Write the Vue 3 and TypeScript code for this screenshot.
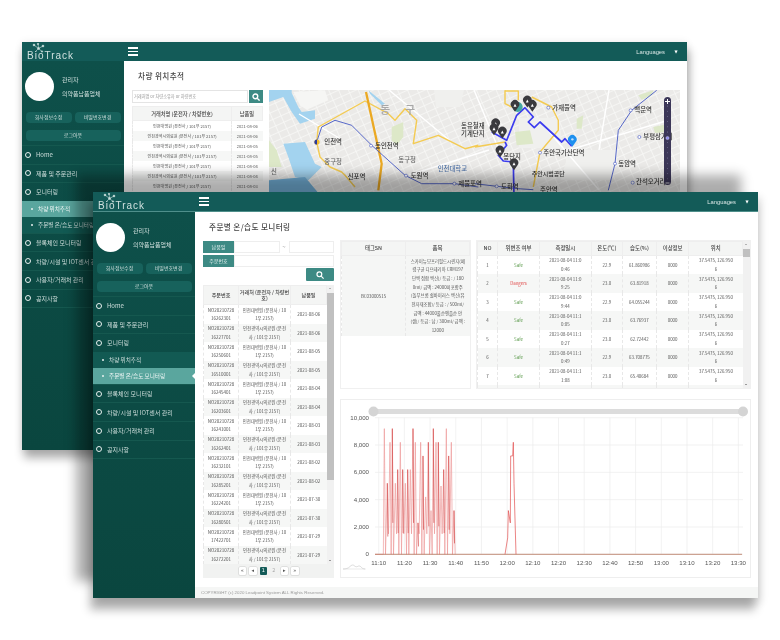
<script setup lang="ts">
const menuTop = ['Home', '제품 및 주문관리', '모니터링']
const subs = ['차량 위치추적', '주문별 온/습도 모니터링']
const menuBottom = ['블록체인 모니터링', '차량/시설 및 IOT센서 관리', '사용자/거래처 관리', '공지사항']

const vehicleRows = [
  ['인천대병원 (운전사 / 101우 2157)', '2021-08-06'],
  ['인천광역시의료원 (운전사 / 101우 2157)', '2021-08-06'],
  ['인천대병원 (운전사 / 101우 2157)', '2021-08-05'],
  ['인천광역시의료원 (운전사 / 101우 2157)', '2021-08-05'],
  ['인천대병원 (운전사 / 101우 2157)', '2021-08-04'],
  ['인천광역시의료원 (운전사 / 101우 2157)', '2021-08-04'],
  ['인천대병원 (운전사 / 101우 2157)', '2021-08-03'],
]

const orderNos = ['16262301', '16227701', '16250601', '16510001', '16245401', '16203601', '16241001', '16262401', '16232101', '16285201', '16224201', '16280501', '17422701', '16272201']
const orderDates = ['08-06', '08-06', '08-05', '08-05', '08-04', '08-04', '08-03', '08-03', '08-02', '08-02', '07-30', '07-30', '07-29', '07-29']

const sensorRows = [
  ['1', 'Safe', '0:46', '22.9', '61.860986'],
  ['2', 'Dangers', '9:25', '23.0', '63.81918'],
  ['3', 'Safe', '9:44', '22.9', '64.055244'],
  ['4', 'Safe', '0:05', '23.0', '63.76937'],
  ['5', 'Safe', '0:27', '23.0', '62.72442'],
  ['6', 'Safe', '0:49', '22.9', '63.708775'],
  ['7', 'Safe', '1:08', '23.0', '65.40684'],
  ['8', 'Safe', '1:30', '23.0', '63.20155'],
]
const sensorDates = ['11:0', '11:0', '11:0', '11:1', '11:1', '11:1', '11:1', '11:1']

const itemLines = [
  '스카이뉴모프리필드시린지(폐',
  '렴구균 디프테리아 CRM197',
  '단백 접합 백신)/ 등급 : / 180',
  '0ml/ 금액 : 24000미포함주',
  '(돌푸브롬 쉴바이러스 백신(유',
  '전자재조합)/ 등급 : / 500ml/',
  '금액 : 44000풀순엔플순 안',
  '(생)/ 등급 : 남 / 300ml/ 금액 :',
  '12000',
]

// the two map crops were measured separately, so points come in two sets
type Pt = [number, number]
const L = ([x, y]: Pt): Pt => [x / 3 - 4, y / 3 - 3]
const R = ([x, y]: Pt): Pt => [x / 3 + 206, y / 3 - 3]
const line = (pts: Pt[]) => pts.map((p, i) => `${i ? 'L' : 'M'}${p[0].toFixed(1)} ${p[1].toFixed(1)}`).join('')
const poly = (pts: Pt[]) => line(pts) + 'Z'

const water = [
  poly(([[12, 8], [80, 8], [80, 18], [100, 60], [110, 75], [150, 70], [150, 95], [105, 110], [80, 75], [55, 30], [12, 45]] as Pt[]).map(L)),
  poly(([[55, 170], [120, 165], [150, 230], [170, 240], [130, 280], [90, 270], [70, 210]] as Pt[]).map(L)),
  poly(([[310, 10], [360, 50], [350, 55], [315, 20]] as Pt[]).map(L)),
]
const sea = poly(([[12, 280], [120, 270], [170, 330], [12, 340]] as Pt[]).map(L))
const parks = [
  poly(([[12, 160], [35, 190], [50, 240], [12, 240]] as Pt[]).map(L)),
  poly(([[380, 120], [415, 105], [415, 150], [395, 175], [380, 160]] as Pt[]).map(L)),
  poly(([[490, 25], [535, 10], [530, 25], [500, 38]] as Pt[]).map(R)),
  poly(([[305, 95], [325, 85], [320, 125], [305, 125]] as Pt[]).map(R)),
  poly(([[535, 120], [575, 112], [575, 135], [540, 138]] as Pt[]).map(R)),
  poly(([[120, 135], [165, 130], [175, 170], [125, 175]] as Pt[]).map(R)),
]
const port = poly(([[85, 15], [180, 10], [190, 40], [125, 68], [105, 55]] as Pt[]).map(L))
const yellow = [
  line(([[155, 165], [160, 120], [300, 42], [370, 80], [390, 100], [420, 65], [455, 100], [445, 170], [520, 145], [600, 185], [640, 175]] as Pt[]).map(L)),
  line(([[155, 165], [165, 210], [195, 240], [230, 255], [240, 265], [270, 300]] as Pt[]).map(L)),
  line(([[0, 180], [90, 165]] as Pt[]).map(R)),
  line(([[90, 10], [90, 50], [110, 60]] as Pt[]).map(R)),
  line(([[90, 12], [130, 12], [130, 40]] as Pt[]).map(R)),
  line(([[170, 30], [230, 60], [250, 100], [250, 130], [195, 195], [175, 300]] as Pt[]).map(R)),
]
const orange = line(([[303, 15], [350, 230], [340, 310]] as Pt[]).map(L))
const subway = [
  line(([[155, 165], [170, 120], [210, 100], [260, 115], [320, 175], [420, 265], [470, 290], [570, 290], [640, 300]] as Pt[]).map(L)),
  line(([[0, 290], [65, 298], [130, 305], [175, 308]] as Pt[]).map(R)),
  line(([[545, 10], [470, 70], [430, 130], [420, 230], [400, 310]] as Pt[]).map(R)),
]
const route = line(([[290, 178], [270, 155], [260, 165], [195, 105], [178, 122], [160, 105], [175, 90], [150, 62], [125, 85], [95, 160], [50, 135]] as Pt[]).map(R))
const route2 = line(([[90, 165], [95, 175], [70, 205], [85, 222], [115, 225], [117, 330]] as Pt[]).map(R))
const stations: Pt[] = [
  ...([[318, 176], [423, 266], [568, 290]] as Pt[]).map(L),
  ...([[65, 298], [467, 70], [493, 150], [420, 230], [473, 287], [220, 62], [195, 197]] as Pt[]).map(R),
]
const pins: Pt[] = ([[120, 55], [157, 42], [172, 55], [62, 110], [57, 125], [82, 135], [75, 192], [117, 230]] as Pt[]).map(R)
const teal = R([128, 60])
const gem = R([292, 160])

const mapLabels: { p: Pt; t: string; s?: number; c?: string }[] = [
  { p: L([178, 172]), t: '인천역' },
  { p: L([330, 182]), t: '동인천역' },
  { p: L([178, 230]), t: '중구청', c: '#666' },
  { p: L([248, 277]), t: '신포역' },
  { p: L([400, 224]), t: '동구청', c: '#666' },
  { p: L([518, 252]), t: '인천대학교', c: '#5577aa' },
  { p: L([437, 274]), t: '도원역' },
  { p: L([580, 298]), t: '제물포역' },
  { p: L([345, 80]), t: '동', s: 11, c: '#a8a8a8' },
  { p: L([420, 80]), t: '구', s: 11, c: '#a8a8a8' },
  { p: L([18, 260]), t: '신', c: '#666' },
  { p: L([588, 122]), t: '동유철재' },
  { p: L([588, 146]), t: '기계단지' },
  { p: R([232, 70]), t: '가재울역' },
  { p: R([478, 76]), t: '백운역' },
  { p: R([505, 155]), t: '부평삼거리' },
  { p: R([430, 238]), t: '동암역' },
  { p: R([483, 292]), t: '간석오거리' },
  { p: R([205, 205]), t: '주안국가산단역' },
  { p: R([170, 268]), t: '주안시범공단', s: 6 },
  { p: R([85, 215]), t: '봉단지' },
  { p: R([78, 305]), t: '도화역' },
  { p: R([195, 315]), t: '주안역' },
]
const zoomDots = Array.from({ length: 15 }, (_, i) => 16 + i * 5.2)

// chart, in pixels of the crop divided by 3
const cx = (zoomX: number) => zoomX / 3 - 10
const cy = (v: number) => 155.3 - (v / 10000) * 136.6
const yTicks = [0, 2000, 4000, 6000, 8000, 10000]
const xTicks = ['11:10', '11:20', '11:30', '11:40', '11:50', '12:00', '12:10', '12:20', '12:30', '12:40', '12:50', '13:00', '13:10', '13:20', '13:30']
const tickX = (i: number) => 38.7 + i * 25.69

const peaks = [[163, 9200], [172, 5200], [180, 8200], [187, 9200], [196, 5200], [203, 6200], [211, 8200], [218, 6200], [226, 5200], [233, 6200], [241, 6200], [249, 9200], [256, 8200], [264, 2300], [272, 8200], [279, 7200], [287, 4200], [295, 8200], [303, 3200], [310, 9200], [318, 8200], [325, 8200], [333, 5000], [341, 6200], [349, 9200], [356, 7200], [364, 8200], [372, 3200]]
function seriesPoints(): string {
  const pts: string[] = [`${cx(135)},${cy(0)}`, `${cx(160)},${cy(0)}`]
  peaks.forEach(([x, v], i) => {
    pts.push(`${cx(x)},${cy(v)}`)
    pts.push(`${cx(x + 3.5)},${cy(i % 3 === 1 ? 1500 : 0)}`)
  })
  return pts.join(' ')
}
const pale = seriesPoints()
const strong = peaks.filter((_, i) => i % 2 === 1).map(([x, v]) => `M${cx(x)} ${cy(v)}L${cx(x + 1.5)} ${cy(v * 0.25)}`).join('')
const hump = [[525, 0], [533, 1200], [535, 3200], [541, 2300], [542, 7200], [548, 7200], [550, 8200], [552, 5200], [558, 0]]
  .map(([x, v]) => `${cx(x)},${cy(v)}`).join(' ')
</script>

<template>
  <div class="stage">
    <section v-for="(win, w) in [0, 1]" :key="win" class="win" :class="w === 0 ? 'win-back' : 'win-front'">
      <header class="bar">
        <div class="logo">
          <svg width="15" height="11" viewBox="0 0 15 11" fill="none" stroke="#cfe2df" stroke-width=".6">
            <path d="M7.500 5.500 3 2M7.500 5.500 12 3M7.500 5.500 7 .5M7.500 5.500 4 9M7.500 5.500 11 8.500" />
            <circle cx="3" cy="2" r=".9" fill="#cfe2df" />
            <circle cx="12" cy="3" r=".9" fill="#cfe2df" />
            <circle cx="7" cy=".9" r=".7" fill="#cfe2df" />
            <circle cx="7.500" cy="5.500" r="1" fill="#cfe2df" />
            <circle cx="11" cy="8.500" r=".7" fill="#cfe2df" />
          </svg>
          <span>BioTrack</span>
        </div>
        <div class="burger"><i></i><i></i><i></i></div>
        <div class="lang">Languages</div>
        <div class="caret">▼</div>
      </header>

      <div class="body">
        <aside class="side">
          <div class="profile">
            <div class="avatar"></div>
            <div class="who">
              <div>관리자</div>
              <div>의약품납품업체</div>
            </div>
          </div>
          <div class="pills">
            <span class="pill">회사정보수정</span>
            <span class="pill">비밀번호변경</span>
            <span class="pill wide">로그아웃</span>
          </div>
          <nav class="menu">
            <div v-for="m in menuTop" :key="m" class="item"><b class="ring"></b>{{ m }}</div>
            <div v-for="(s, i) in subs" :key="s" class="sub" :class="{ on: i === w }"><b class="dot"></b>{{ s }}</div>
            <div v-for="m in menuBottom" :key="m" class="item"><b class="ring"></b>{{ m }}</div>
          </nav>
        </aside>

        <main v-if="w === 0" class="main">
          <h1 class="title back-title">차량 위치추적</h1>
          <div class="track">
            <div class="col-left">
              <div class="search">
                <div class="search-input">거래처명 or 차량소유자 or 차량번호</div>
                <div class="search-btn">
                  <svg width="8" height="8" viewBox="0 0 10 10" fill="none" stroke="#fff" stroke-width="1.7"><circle cx="4.200" cy="4.200" r="3" /><path d="m6.500 6.500 3 3" /></svg>
                </div>
              </div>
              <table class="grid vehicle">
                <thead><tr><th>거래처명 (운전자 / 차량번호)</th><th class="narrow">납품일</th></tr></thead>
                <tbody>
                  <tr v-for="(r, i) in vehicleRows" :key="i"><td>{{ r[0] }}</td><td>{{ r[1] }}</td></tr>
                </tbody>
              </table>
            </div>
            <svg class="map" width="411" height="110" viewBox="0 0 411 110">
              <defs>
                <pattern id="streets" width="9" height="7" patternUnits="userSpaceOnUse" patternTransform="rotate(-24)">
                  <rect width="9" height="7" fill="#ebeae8" />
                  <path d="M0 .5h9M.5 0v7" stroke="#f8f8f6" stroke-width=".8" />
                </pattern>
              </defs>
              <rect width="411" height="110" fill="url(#streets)" />
              <path :d="port" fill="#f6f6f4" />
              <path d="M165 0h30l-4 17h-24zM250 28h40l4 30h-44zM300 60h50l-8 30h-50z" fill="#f0f0ee" />
              <path v-for="(d, i) in parks" :key="i" :d="d" fill="#dde8c8" />
              <path v-for="(d, i) in water" :key="i" :d="d" fill="#a3d3ef" />
              <path :d="sea" fill="#74b2da" />
              <path d="M30 24 70 48M120 0 180 50M205 0 230 60M270 30 330 100M340 0 330 60M300 60l100-30M140 85 220 60" stroke="#fff" stroke-width="1.400" fill="none" />
              <path v-for="(d, i) in yellow" :key="i" :d="d" fill="none" stroke="#f4cb52" stroke-width="1.400" stroke-linejoin="round" />
              <path :d="orange" fill="none" stroke="#eba923" stroke-width="2.300" />
              <path v-for="(d, i) in subway" :key="i" :d="d" fill="none" stroke="#4659c4" stroke-width=".9" />
              <circle v-for="(s, i) in stations" :key="i" :cx="s[0]" :cy="s[1]" r="1.500" fill="#fff" stroke="#4659c4" stroke-width=".6" />
              <circle cx="48" cy="52" r="2.600" fill="#f4bd2d" />
              <path d="M48 49.400a2.600 2.600 0 0 0 0 5.200z" fill="#2c3a9a" />
              <path :d="route" fill="none" stroke="#3c3cef" stroke-width="1.700" stroke-linejoin="round" />
              <path :d="route2" fill="none" stroke="#3c3cef" stroke-width="1.700" stroke-linejoin="round" />
              <circle :cx="teal[0]" :cy="teal[1]" r="5" fill="#45a7a0" />
              <g v-for="(p, i) in pins" :key="i" :transform="`translate(${p[0]} ${p[1]})`">
                <path d="M0 6.500-3.500 1.500a4.300 4.300 0 1 1 7 0z" fill="#3a3a3e" />
                <path d="M-1.500 1.500 0-1.500 1.500 1.500z" fill="#fff" />
              </g>
              <g :transform="`translate(${gem[0]} ${gem[1]})`">
                <path d="M0 6.500-3.500 1.500a4.300 4.300 0 1 1 7 0z" fill="#1e90ef" />
                <circle cy="-1" r="1.200" fill="#bfe0fb" />
              </g>
              <text v-for="l in mapLabels" :key="l.t" :x="l.p[0]" :y="l.p[1]" :font-size="l.s || 6.400" :fill="l.c || '#333'" class="map-text">{{ l.t }}</text>
              <rect x="395" y="7" width="7" height="88" rx="3.500" fill="#3c3758" />
              <path d="M398.500 9v5M396 11.500h5" stroke="#fff" stroke-width="1" />
              <circle v-for="d in zoomDots" :key="d" cx="398.500" :cy="d" r=".4" fill="#a9a6c6" />
              <circle cx="398.500" cy="48" r="1.600" fill="#8f8cf0" stroke="#e8e8ff" stroke-width=".4" />
              <path d="M396.500 93h4" stroke="#fff" stroke-width=".8" />
            </svg>
          </div>
        </main>

        <main v-else class="main">
          <h1 class="title">주문별 온/습도 모니터링</h1>
          <div class="monitor">
            <div class="col-left orders">
              <div class="form-row">
                <span class="tag">납품일</span><span class="field"></span><span class="tilde">~</span><span class="field"></span>
              </div>
              <div class="form-row">
                <span class="tag">주문번호</span><span class="field"></span>
              </div>
              <div class="find">
                <svg width="8" height="8" viewBox="0 0 10 10" fill="none" stroke="#fff" stroke-width="1.500"><circle cx="4.200" cy="4.200" r="3" /><path d="m6.500 6.500 3 3" /></svg>
              </div>
              <div class="order-wrap">
                <table class="grid orderlist">
                  <thead><tr><th class="c1">주문번호</th><th class="c2">거래처 (운전자 / 차량번호)</th><th class="c3">납품일</th></tr></thead>
                  <tbody>
                    <tr v-for="(n, i) in orderNos" :key="n">
                      <td>NO20210728<br />{{ n }}</td>
                      <td class="wrapname">{{ i % 2 ? '인천광역시의료원 (운전사 / 101우 2157)' : '인천대병원 (운전사 / 101우 2157)' }}</td>
                      <td>2021-{{ orderDates[i] }}</td>
                    </tr>
                  </tbody>
                </table>
                <div class="scroll"><span class="thumb long"></span></div>
              </div>
              <div class="pager">
                <span class="pg">«</span><span class="pg">◂</span><span class="pg cur">1</span><span class="pg plain">2</span><span class="pg">▸</span><span class="pg">»</span>
              </div>
            </div>

            <div class="col-right">
              <div class="tables">
                <div class="panel tagbox">
                  <table class="grid tagtable">
                    <thead><tr><th>태그SN</th><th>품목</th></tr></thead>
                    <tbody>
                      <tr>
                        <td>BC03000515</td>
                        <td class="item-text"><template v-for="t in itemLines" :key="t">{{ t }}<br /></template></td>
                      </tr>
                    </tbody>
                  </table>
                </div>
                <div class="panel sensorbox">
                  <table class="grid sensors">
                    <thead>
                      <tr><th class="no">NO</th><th>위변조 여부</th><th>측정일시</th><th>온도(℃)</th><th>습도(%)</th><th>이상정보</th><th>위치</th></tr>
                    </thead>
                    <tbody>
                      <tr v-for="(r, i) in sensorRows" :key="r[0]">
                        <td>{{ r[0] }}</td>
                        <td :class="r[1] === 'Safe' ? 'safe' : 'danger'">{{ r[1] }}</td>
                        <td>2021-08-04 {{ sensorDates[i] }}<br />{{ r[2] }}</td>
                        <td>{{ r[3] }}</td>
                        <td>{{ r[4] }}</td>
                        <td>0000</td>
                        <td>37.5475, 126.950<br />6</td>
                      </tr>
                    </tbody>
                  </table>
                  <div class="scroll"><span class="thumb short"></span></div>
                </div>
              </div>

              <div class="chart">
                <svg width="409" height="177" viewBox="1 1 409 177">
                  <rect x="33" y="10" width="370" height="5" rx="2.500" fill="#dcdcdc" />
                  <circle cx="33.500" cy="12.500" r="5" fill="#d4d4d4" />
                  <circle cx="403" cy="12.500" r="5" fill="#d4d4d4" />
                  <g stroke="#ececec" stroke-width=".7">
                    <line v-for="v in yTicks" :key="v" x1="35" x2="403" :y1="cy(v)" :y2="cy(v)" />
                    <line v-for="(t, i) in xTicks" :key="t" :x1="tickX(i)" :x2="tickX(i)" y1="18.700" y2="155.300" />
                  </g>
                  <text v-for="v in yTicks" :key="v" x="29" :y="cy(v) + 2" text-anchor="end" class="axis">{{ v.toLocaleString('en-US') }}</text>
                  <text v-for="(t, i) in xTicks" :key="t" :x="tickX(i)" y="166" text-anchor="middle" class="axis">{{ t }}</text>
                  <polyline :points="pale" fill="none" stroke="#ee9c9c" stroke-width=".7" />
                  <path :d="strong" fill="none" stroke="#c33" stroke-width=".6" />
                  <polyline :points="hump" fill="none" stroke="#e25050" stroke-width=".7" />
                  <line x1="35" x2="402" :y1="cy(0)" :y2="cy(0)" stroke="#b5745a" stroke-width=".8" />
                  <path d="M3 170c3 0 5-.5 7-2.500 1.500-1.500 3-2 4-1 1.500 1.500 2.500 1.500 3.500 1 1.500-1 3-.500 4 1 1 1 2 1.500 4 1.500" fill="none" stroke="#bbb" stroke-width=".5" />
                  <line x1="3" x2="25" y1="170" y2="170" stroke="#ccc" stroke-width=".4" />
                </svg>
              </div>
            </div>
          </div>
          <footer class="foot">COPYRIGHT (c) 2020 Leadpoint System ALL Rights Reserved.</footer>
        </main>
      </div>
    </section>
  </div>
</template>

<style>
html, body {
  background: #fff;
}
</style>

<style scoped>
.stage {
  position: relative;
  width: 780px;
  height: 640px;
  overflow: hidden;
  background: #fff;
  font-family: "Noto Sans CJK KR", "Liberation Sans", sans-serif;
  filter: blur(0.3px);
}
.win {
  position: absolute;
  display: flex;
  flex-direction: column;
  background: #fff;
}
.win-back {
  left: 22px;
  top: 42px;
  width: 665px;
  height: 408px;
  box-shadow: 2px 8px 9px rgba(0, 0, 0, 0.32), 0 0 8px rgba(0, 0, 0, 0.08);
}
.win-front {
  left: 93px;
  top: 192px;
  width: 665px;
  height: 406px;
  box-shadow: -17px -17px 11px rgba(0, 0, 0, 0.32), -3px 12px 9px rgba(0, 0, 0, 0.28), 3px 5px 8px rgba(0, 0, 0, 0.12);
}
.bar {
  height: 19px;
  flex: none;
  display: flex;
  align-items: center;
  background: #135b58;
  color: #fff;
}
.win-front .bar {
  height: 20px;
  border-bottom: 1px solid #4f8f8b;
  box-sizing: border-box;
}
.logo {
  width: 102px;
  height: 100%;
  flex: none;
  padding: 1px 0 0 5px;
  box-sizing: border-box;
  display: flex;
  flex-direction: column;
  color: #cfe0de;
}
.logo svg {
  flex: none;
  margin-left: 4px;
}
.logo span {
  margin-top: -3px;
  font-family: "Liberation Sans", sans-serif;
  font-size: 10px;
  line-height: 10px;
  letter-spacing: 1px;
}
.burger {
  width: 10px;
  display: flex;
  flex-direction: column;
  gap: 2px;
  margin-left: 4px;
}
.burger i {
  height: 1.400px;
  background: #fff;
}
.lang {
  margin-left: auto;
  font: 5.800px "Liberation Sans", sans-serif;
  color: #dbe8e7;
}
.caret {
  width: 22px;
  text-align: center;
  font: 4px "DejaVu Sans", sans-serif;
}
.body {
  flex: 1;
  min-height: 0;
  display: flex;
}
.side {
  width: 102px;
  flex: none;
  background: linear-gradient(#0e504a, #0a463f);
  color: #d0dfdd;
  font-size: 6px;
}
.profile {
  display: flex;
  gap: 8px;
  align-items: center;
  padding: 11px 0 0 3px;
}
.avatar {
  width: 29px;
  height: 29px;
  border-radius: 50%;
  background: #fff;
}
.who div {
  line-height: 14px;
}
.pills {
  display: flex;
  flex-wrap: wrap;
  justify-content: center;
  gap: 3px;
  padding: 11px 3px 0;
  height: 44px;
  box-sizing: border-box;
  font-size: 5px;
}
.pill {
  width: 46px;
  height: 10.500px;
  line-height: 10.500px;
  border-radius: 4px;
  background: #17625c;
  text-align: center;
}
.pill.wide {
  width: 95px;
}
.menu {
  border-bottom: 1px solid #15584f;
}
.item {
  height: 18.600px;
  display: flex;
  align-items: center;
  gap: 5px;
  padding-left: 3px;
  box-sizing: border-box;
  border-top: 1px solid #15584f;
  font-size: 6px;
}
.ring {
  width: 4px;
  height: 4px;
  border: 1px solid #e8f0ef;
  border-radius: 50%;
}
.sub {
  position: relative;
  height: 16px;
  display: flex;
  align-items: center;
  gap: 5px;
  padding-left: 9px;
  background: #125a53;
  font-size: 5.600px;
}
.sub.on {
  background: #5aa69e;
  color: #f0f7f6;
}
.sub.on::after {
  content: "";
  position: absolute;
  right: 0;
  top: 5px;
  border: 3px solid transparent;
  border-right-color: #fff;
}
.dot {
  width: 2px;
  height: 2px;
  background: #e8f0ef;
  border-radius: 50%;
}
.main {
  flex: 1;
  min-width: 0;
  display: flex;
  flex-direction: column;
  background: #fff;
}
.title {
  margin: 0;
  height: 28px;
  padding-left: 14px;
  font-size: 7.600px;
  line-height: 30px;
  font-weight: 500;
  color: #444;
  letter-spacing: 0.4px;
}
.back-title {
  height: 29px;
}
.track {
  display: flex;
  gap: 6px;
  padding-left: 8px;
}
.col-left {
  width: 131px;
  flex: none;
}
.search {
  display: flex;
  gap: 1px;
  height: 13px;
}
.search-input {
  flex: 1;
  border: 1px solid #e4e4e4;
  font-size: 4.200px;
  line-height: 11px;
  padding-left: 1px;
  color: #999;
}
.search-btn {
  width: 14px;
  background: #3d8a84;
  display: flex;
  align-items: center;
  justify-content: center;
}
.grid {
  width: 100%;
  border-collapse: collapse;
  table-layout: fixed;
  color: #555;
  text-align: center;
}
.grid th {
  padding: 0;
  line-height: 1;
  background: #f4f5f4;
  font-weight: 500;
  color: #444;
  border: 1px solid #eee;
}
.grid td {
  border-left: 1px dashed #e8e8e8;
  padding: 0;
}
.grid tbody tr:nth-child(even) {
  background: #f6f7f6;
}
.vehicle {
  margin-top: 3px;
  font-size: 4.100px;
}
.vehicle th {
  height: 13px;
  font-size: 5.200px;
}
.vehicle th.narrow {
  width: 30px;
}
.vehicle td {
  height: 10px;
  line-height: 10px;
  white-space: nowrap;
  overflow: hidden;
}
.monitor {
  flex: 1;
  min-height: 0;
  display: flex;
  gap: 6px;
  padding: 0 7px 9px 8px;
}
.orders {
  display: flex;
  flex-direction: column;
  padding-top: 1px;
}
.form-row {
  height: 12px;
  flex: none;
  margin-bottom: 2px;
  display: flex;
  align-items: stretch;
}
.form-row + .form-row {
  margin-bottom: 0;
}
.tag {
  width: 31px;
  background: #3d8a84;
  color: #e6f1f0;
  font-size: 5px;
  line-height: 12px;
  text-align: center;
}
.field {
  flex: 1;
  border: 1px solid #eee;
}
.tilde {
  width: 9px;
  text-align: center;
  color: #aaa;
  font-size: 6px;
  line-height: 12px;
}
.find {
  align-self: flex-end;
  flex: none;
  width: 28px;
  height: 13px;
  margin: 1px 0 4px;
  border-radius: 1px;
  background: #3d8a84;
  display: flex;
  align-items: center;
  justify-content: center;
}
.order-wrap {
  flex: 1;
  min-height: 0;
  display: flex;
  overflow: hidden;
}
.orderlist {
  flex: 1;
  min-width: 0;
  width: auto;
  font-size: 4.500px;
  align-self: flex-start;
}
.orderlist th {
  height: 18px;
  font-size: 5.100px;
  line-height: 6px;
}
.c1 {
  width: 34px;
}
.c3 {
  width: 35px;
}
.orderlist td {
  height: 18.500px;
  line-height: 8.500px;
}
.orderlist td.wrapname {
  padding: 0 3px;
  font-size: 4.400px;
  word-break: break-all;
}
.scroll {
  position: relative;
  width: 7px;
  flex: none;
  padding-top: 8px;
  background: #f1f1f1;
  box-sizing: border-box;
}
.scroll::before,
.scroll::after {
  content: "";
  position: absolute;
  left: 2px;
  border: 1.500px solid transparent;
}
.scroll::before {
  top: 2px;
  border-bottom-color: #777;
}
.scroll::after {
  bottom: 2px;
  border-top-color: #444;
}
.thumb {
  display: block;
  width: 100%;
  background: #c0c0c0;
}
.thumb.long {
  height: 187px;
}
.thumb.short {
  height: 8px;
}
.pager {
  height: 14px;
  flex: none;
  display: flex;
  align-items: center;
  justify-content: center;
  gap: 3px;
  background: #f1f2f1;
}
.pg {
  width: 7.500px;
  height: 7.500px;
  background: #fff;
  border-radius: 1px;
  box-shadow: 0 0 0 0.5px #ccc;
  font: 5px/7.500px "DejaVu Sans", sans-serif;
  text-align: center;
  color: #555;
}
.pg.cur {
  background: #135b58;
  box-shadow: none;
  color: #fff;
}
.pg.plain {
  background: none;
  box-shadow: none;
  color: #aaa;
}
.col-right {
  flex: 1;
  min-width: 0;
  display: flex;
  flex-direction: column;
  gap: 10px;
}
.tables {
  height: 149px;
  flex: none;
  display: flex;
  gap: 5px;
}
.panel {
  border: 1px solid #f0f0f0;
  box-sizing: border-box;
  overflow: hidden;
}
.tagbox {
  width: 131px;
}
.sensorbox {
  flex: 1;
  min-width: 0;
  display: flex;
}
.tagtable,
.sensors {
  font-size: 4.400px;
}
.tagtable th,
.sensors th {
  height: 12.500px;
  font-size: 5.400px;
}
.tagtable td {
  background: #f5f6f5;
}
.item-text {
  padding: 1px 0 !important;
  line-height: 8.700px;
  white-space: nowrap;
}
.sensors {
  flex: 1;
  min-width: 0;
  width: auto;
  align-self: flex-start;
}
.sensors .no {
  width: 19px;
}
.sensors td {
  height: 18.500px;
  line-height: 8.500px;
}
.safe {
  color: #5a9a4a;
}
.danger {
  color: #e04a4a;
}
.chart {
  flex: 1;
  min-height: 0;
  border: 1px solid #eeeeee;
  box-sizing: border-box;
}
.chart svg {
  display: block;
}
.axis {
  font-size: 6.100px;
  fill: #555;
  font-family: "Liberation Sans", sans-serif;
}
.map {
  flex: none;
  display: block;
}
.map-text {
  font-weight: 500;
}
.foot {
  height: 11px;
  flex: none;
  padding-left: 6px;
  background: #f5f6f5;
  font: 4.400px/11px "Liberation Sans", sans-serif;
  color: #999;
}
</style>
